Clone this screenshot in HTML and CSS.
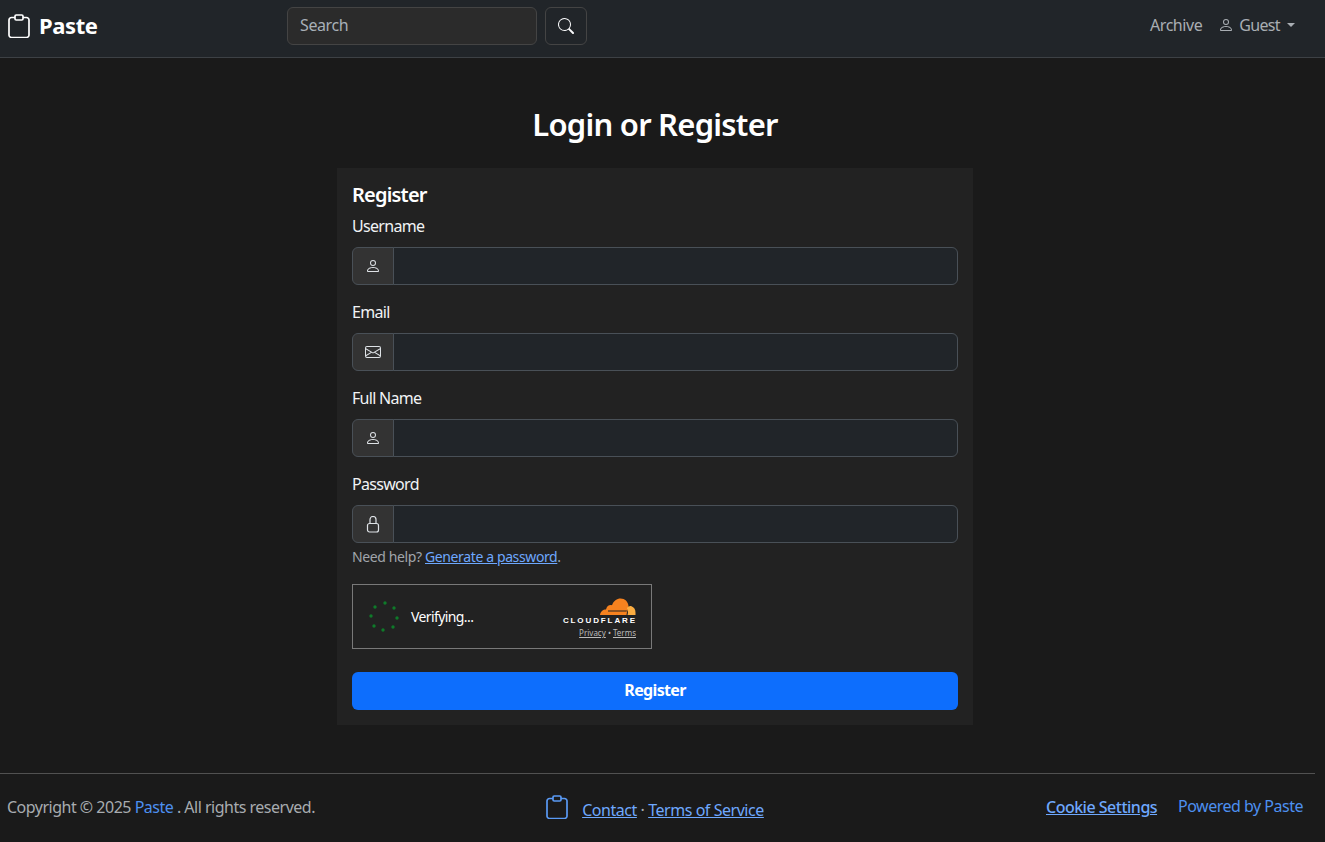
FILE: index.html
```html
<!DOCTYPE html>
<html lang="en">
<head>
<meta charset="utf-8">
<title>Paste - Login or Register</title>
<link rel="stylesheet" href="styles.css">
</head>
<body>
<nav class="navbar">
  <a class="brand" href="#">
    <svg class="clip" viewBox="0 0 22 24" fill="none" stroke="currentColor" stroke-width="1.7"><path d="M7 3.500H3.500a2.500 2.500 0 0 0-2.500 2.500v15a2.500 2.500 0 0 0 2.500 2.500h15a2.500 2.500 0 0 0 2.500-2.500V6a2.500 2.500 0 0 0-2.500-2.500H15"/><rect x="7" y="1" width="8" height="5" rx="1.200"/></svg>
    <span>Paste</span>
  </a>
  <form class="search">
    <input class="search-input" type="text" placeholder="Search">
    <button class="search-btn" type="button" aria-label="Search">
      <svg width="16" height="16" viewBox="0 0 16 16" fill="currentColor"><path d="M11.742 10.344a6.500 6.500 0 1 0-1.397 1.398h-.001c.03.04.062.078.098.115l3.850 3.850a1 1 0 0 0 1.415-1.414l-3.850-3.850a1.007 1.007 0 0 0-.115-.1zM12 6.500a5.500 5.500 0 1 1-11 0 5.500 5.500 0 0 1 11 0z"/></svg>
    </button>
  </form>
  <div class="nav-right">
    <a class="nav-link" href="#">Archive</a>
    <a class="nav-link guest" href="#">
      <svg width="16" height="16" viewBox="0 0 16 16" fill="currentColor"><path d="M8 8a3 3 0 1 0 0-6 3 3 0 0 0 0 6Zm2-3a2 2 0 1 1-4 0 2 2 0 0 1 4 0Zm4 8c0 1-1 1-1 1H3s-1 0-1-1 1-4 6-4 6 3 6 4Zm-1-.004c-.001-.246-.154-.986-.832-1.664C11.516 10.680 10.289 10 8 10c-2.290 0-3.516.680-4.168 1.332-.678.678-.830 1.418-.832 1.664h10Z"/></svg>
      <span>Guest</span><i class="caret"></i>
    </a>
  </div>
</nav>

<main class="main">
  <h1 class="title">Login or Register</h1>
  <section class="card">
    <h2 class="card-title">Register</h2>
    <label class="label">Username</label>
    <div class="group">
      <span class="addon"><svg width="16" height="16" viewBox="0 0 16 16" fill="currentColor"><path d="M8 8a3 3 0 1 0 0-6 3 3 0 0 0 0 6Zm2-3a2 2 0 1 1-4 0 2 2 0 0 1 4 0Zm4 8c0 1-1 1-1 1H3s-1 0-1-1 1-4 6-4 6 3 6 4Zm-1-.004c-.001-.246-.154-.986-.832-1.664C11.516 10.680 10.289 10 8 10c-2.290 0-3.516.680-4.168 1.332-.678.678-.830 1.418-.832 1.664h10Z"/></svg></span>
      <input class="control" type="text">
    </div>
    <label class="label">Email</label>
    <div class="group">
      <span class="addon"><svg width="16" height="16" viewBox="0 0 16 16" fill="currentColor"><path d="M0 4a2 2 0 0 1 2-2h12a2 2 0 0 1 2 2v8a2 2 0 0 1-2 2H2a2 2 0 0 1-2-2V4Zm2-1a1 1 0 0 0-1 1v.217l7 4.200 7-4.200V4a1 1 0 0 0-1-1H2Zm13 2.383-4.708 2.825L15 11.105V5.383Zm-.034 6.876-5.640-3.471L8 9.583l-1.326-.795-5.640 3.470A1 1 0 0 0 2 13h12a1 1 0 0 0 .966-.741ZM1 11.105l4.708-2.897L1 5.383v5.722Z"/></svg></span>
      <input class="control" type="email">
    </div>
    <label class="label">Full Name</label>
    <div class="group">
      <span class="addon"><svg width="16" height="16" viewBox="0 0 16 16" fill="currentColor"><path d="M8 8a3 3 0 1 0 0-6 3 3 0 0 0 0 6Zm2-3a2 2 0 1 1-4 0 2 2 0 0 1 4 0Zm4 8c0 1-1 1-1 1H3s-1 0-1-1 1-4 6-4 6 3 6 4Zm-1-.004c-.001-.246-.154-.986-.832-1.664C11.516 10.680 10.289 10 8 10c-2.290 0-3.516.680-4.168 1.332-.678.678-.830 1.418-.832 1.664h10Z"/></svg></span>
      <input class="control" type="text">
    </div>
    <label class="label">Password</label>
    <div class="group group-tight">
      <span class="addon"><svg width="16" height="17" viewBox="0 0 16 17" fill="none" stroke="currentColor" stroke-width="1.200"><rect x="2.500" y="7.500" width="11" height="8.500" rx="2"/><path d="M5 7.500V3.500a3 3 0 0 1 6 0v4"/></svg></span>
      <input class="control" type="password">
    </div>
    <p class="help">Need help? <a href="#">Generate a password</a>.</p>
    <div class="turnstile">
      <svg class="spinner" width="32" height="33" viewBox="0 0 32 33" fill="#0f7a2a"><circle cx="7" cy="7" r="1.700"/><circle cx="17" cy="3" r="1.700"/><circle cx="26" cy="8" r="1.700"/><circle cx="3" cy="16" r="1.700"/><circle cx="29" cy="18" r="1.700"/><circle cx="6" cy="26" r="1.700"/><circle cx="15" cy="30" r="1.700"/><circle cx="25" cy="27" r="1.700"/></svg>
      <span class="verifying">Verifying...</span>
      <div class="cf">
        <svg class="cf-cloud" width="36" height="18" viewBox="0 0 36 18"><path fill="#f6821f" d="M0 17c.4-3.500 3-5.500 6-5.500.8-3.500 3.500-5 6-4.200C13.500 3 17 .6 20.500.6c4.500 0 7.500 3 8 7.400L28 11l-1 3-.5 3Z"/><path fill="#fbad41" d="M27.500 17c.8-2.600.6-5-.6-6.600 1-2 3-2.800 4.600-2.200 2.500.8 4 3.300 4 6.200V17Z"/><path fill="#222" d="M8 12.500h19l-.4 1H8Z"/></svg>
        <span class="cf-name">CLOUDFLARE</span>
        <span class="cf-links"><a href="#">Privacy</a> • <a href="#">Terms</a></span>
      </div>
    </div>
    <button class="submit" type="button">Register</button>
  </section>
</main>

<footer class="footer">
  <hr class="rule">
  <div class="footer-row">
    <p class="copy">Copyright © 2025 <a href="#">Paste</a> . All rights reserved.</p>
    <div class="mid">
      <svg class="clip" viewBox="0 0 22 24" fill="none" stroke="currentColor" stroke-width="1.700"><path d="M7 3.500H3.500a2.500 2.500 0 0 0-2.500 2.500v15a2.500 2.500 0 0 0 2.500 2.500h15a2.500 2.500 0 0 0 2.500-2.500V6a2.500 2.500 0 0 0-2.500-2.500H15"/><rect x="7" y="1" width="8" height="5" rx="1.200"/></svg>
      <span class="mid-links"><a href="#">Contact</a> · <a href="#">Terms of Service</a></span>
    </div>
    <div class="end">
      <a class="cookie" href="#">Cookie Settings</a>
      <a class="powered" href="#">Powered by Paste</a>
    </div>
  </div>
</footer>
</body>
</html>
```
FILE: styles.css
```css
* { box-sizing: border-box; }
html, body { margin: 0; height: 100%; }
body {
  background: #1a1a1a;
  color: #dee2e6;
  font-family: "Noto Sans", "Liberation Sans", sans-serif;
  font-size: 16px;
  line-height: 24px;
  overflow: hidden;
}
a { color: #6ea8fe; }

.navbar {
  display: flex;
  align-items: center;
  height: 58px;
  background: #212529;
  border-bottom: 1px solid #3d4145;
  padding: 0 30px 5px 8px;
}
.brand {
  display: flex;
  align-items: center;
  gap: 9px;
  width: 279px;
  color: #fff;
  font-size: 22px;
  font-weight: 700;
  text-decoration: none;
  letter-spacing: -0.4px;
}
.brand span { padding-bottom: 2px; }
.clip { width: 22px; height: 24px; flex: none; }
.search { display: flex; gap: 8px; }
.search-input {
  width: 250px;
  height: 38px;
  padding: 0 12px 2px;
  background: #2b2b2b;
  border: 1px solid #444;
  border-radius: 6px;
  color: #fff;
  font: inherit;
  letter-spacing: -0.4px;
}
.search-input::placeholder { color: #a8b0b8; opacity: 1; }
.search-btn {
  display: flex;
  align-items: center;
  justify-content: center;
  width: 42px;
  height: 38px;
  background: transparent;
  border: 1px solid #444;
  border-radius: 6px;
  color: #f8f9fa;
  padding: 0;
}
.nav-right { margin-left: auto; display: flex; gap: 16px; align-items: center; }
.nav-link {
  display: flex;
  align-items: center;
  padding-bottom: 2px;
  color: #a9aeb3;
  text-decoration: none;
  letter-spacing: -0.45px;
}
.guest { letter-spacing: -0.65px; }
.guest svg { margin-right: 5px; }
.caret {
  margin-left: 7px;
  border-top: 4.8px solid;
  border-left: 4.8px solid transparent;
  border-right: 4.8px solid transparent;
}

.main { display: flex; flex-direction: column; align-items: center; padding-right: 15px; }
.title {
  margin: 46px 0 24px;
  color: #fff;
  font-size: 31px;
  line-height: 40px;
  font-weight: 600;
  letter-spacing: -0.76px;
}
.card {
  width: 636px;
  height: 557px;
  padding: 15px;
  background: #222;
}
.card-title {
  margin: 0 0 7px;
  color: #fff;
  font-size: 20px;
  line-height: 24px;
  font-weight: 600;
  letter-spacing: -0.8px;
}
.label {
  display: block;
  margin-bottom: 9px;
  color: #f1f3f5;
  letter-spacing: -0.7px;
}
.group {
  display: flex;
  height: 38px;
  margin-bottom: 15px;
}
.group-tight { margin-bottom: 3px; }
.addon {
  display: flex;
  align-items: center;
  justify-content: center;
  width: 42px;
  background: #333;
  border: 1px solid #495057;
  border-radius: 6px 0 0 6px;
  color: #dee2e6;
}
.control {
  flex: 1;
  margin-left: -1px;
  background: #212529;
  border: 1px solid #495057;
  border-radius: 0 6px 6px 0;
  color: #fff;
  font: inherit;
}
.help {
  margin: 0 0 17px;
  color: #a0a5aa;
  font-size: 14px;
  line-height: 21px;
  letter-spacing: -0.38px;
}
.turnstile {
  display: flex;
  align-items: center;
  width: 300px;
  height: 65px;
  margin-bottom: 23px;
  padding: 0 15px;
  border: 1px solid #797979;
  color: #fff;
}
.spinner { flex: none; }
.verifying { margin-left: 11px; font-size: 14px; letter-spacing: -0.6px; }
.cf {
  margin-left: auto;
  padding-top: 4px;
  display: flex;
  flex-direction: column;
  align-items: flex-end;
}
.cf-cloud { display: block; }
.cf-name {
  color: #fff;
  font: 700 8px/10px "Liberation Sans", sans-serif;
  letter-spacing: 1.9px;
  margin-right: -1px;
}
.cf-links {
  margin-top: 1px;
  font-size: 8px;
  line-height: 12px;
  color: #bbb;
}
.cf-links a { color: #bbb; }
.submit {
  display: block;
  width: 100%;
  height: 38px;
  padding: 0 0 2px;
  background: #0d6efd;
  border: 0;
  border-radius: 6px;
  color: #fff;
  font: 700 16px/24px "Noto Sans", sans-serif;
  letter-spacing: -0.65px;
}

.footer { margin-top: 48px; padding-right: 10px; }
.rule { margin: 0; border: 0; border-top: 1px solid #515151; }
.footer-row {
  display: grid;
  grid-template-columns: 1fr auto 1fr;
  align-items: center;
  padding: 18px 12px 0 7px;
  color: #a8acb0;
  letter-spacing: -0.5px;
}
.copy { margin: 0; }
.copy a { text-decoration: none; color: #4d90f0; }
.mid { display: flex; align-items: center; gap: 14px; color: #5a9af5; }
.mid-links { color: #a8acb0; padding-top: 6px; letter-spacing: -0.45px; }
.end { display: flex; align-items: center; justify-content: flex-end; gap: 21px; }
.cookie { font-weight: 500; }
.powered { text-decoration: none; color: #4d90f0; padding-bottom: 2px; }
```
